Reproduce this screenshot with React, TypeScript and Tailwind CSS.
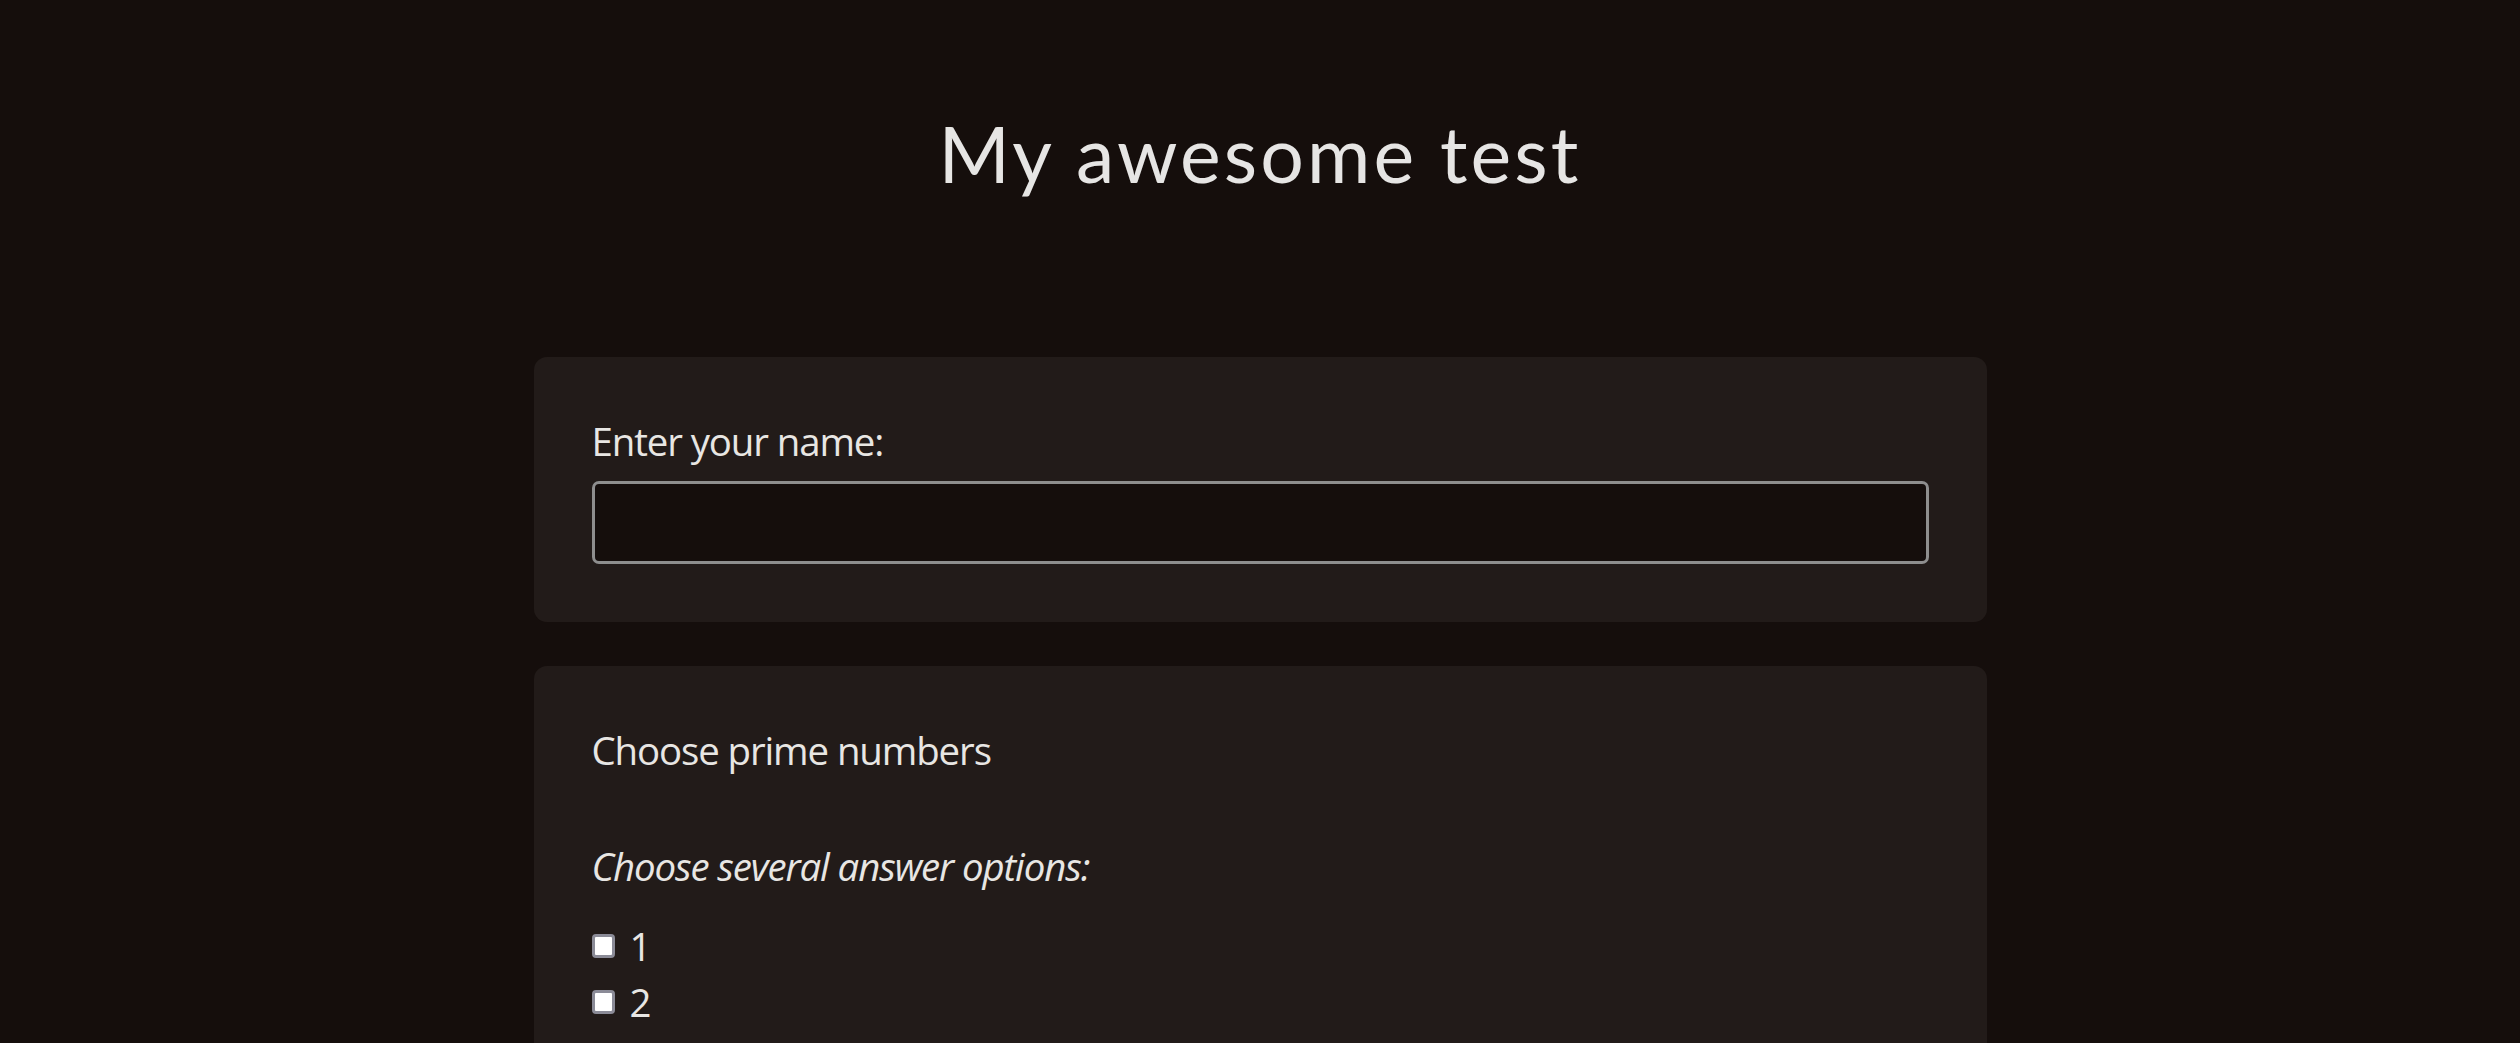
import { useState } from 'react';

const options = ['1', '2', '3', '5', '7', '9'];

export default function App() {
  const [name, setName] = useState('');
  const [checked, setChecked] = useState<string[]>([]);

  const toggle = (v: string) =>
    setChecked((c) => (c.includes(v) ? c.filter((x) => x !== v) : [...c, v]));

  return (
    <div className="min-h-screen w-full bg-[#150e0c] text-[#e8e6e3] font-['Open_Sans',sans-serif] tracking-[-1.1px] flex flex-col items-center pb-16">
      {/* Title */}
      <h1 className="mt-[107px] mb-[158px] font-['Lato',sans-serif] text-[77px] leading-[92px] tracking-[3.1px] text-[#e6e5e4]">
        My awesome test
      </h1>

      <div className="w-[1453px] flex flex-col gap-[44px]">
        {/* Name card */}
        <section className="bg-[#221b19] rounded-[13px] p-[58px]">
          <label htmlFor="name" className="block text-[38.4px] leading-[52px] mb-[14px]">
            Enter your name:
          </label>
          <input
            id="name"
            value={name}
            onChange={(e) => setName(e.target.value)}
            className="w-full h-[83px] bg-[#150e0c] border-[3px] border-[#8e8e8e] rounded-[7px] px-4 text-[38.4px] text-[#e8e6e3] outline-none"
          />
        </section>

        {/* Question card */}
        <section className="bg-[#221b19] rounded-[13px] px-[58px] pt-[58px] pb-[58px]">
          <div className="text-[38.4px] leading-[52px]">Choose prime numbers</div>
          <p className="mt-[64px] italic text-[38.4px] leading-[52px]">Choose several answer options:</p>
          <div className="mt-[28px] flex flex-col gap-[4px]">
            {options.map((o) => (
              <label key={o} className="flex items-center gap-[15px] text-[38.4px] leading-[52px] cursor-pointer">
                <span
                  onClick={() => toggle(o)}
                  className="w-[23px] h-[24px] bg-white border-[3px] border-[#8b8b97] rounded-[4px] flex items-center justify-center"
                >
                  {checked.includes(o) && <span className="w-[10px] h-[10px] bg-[#1a73e8]" />}
                </span>
                <span>{o}</span>
              </label>
            ))}
          </div>
        </section>
      </div>
    </div>
  );
}
